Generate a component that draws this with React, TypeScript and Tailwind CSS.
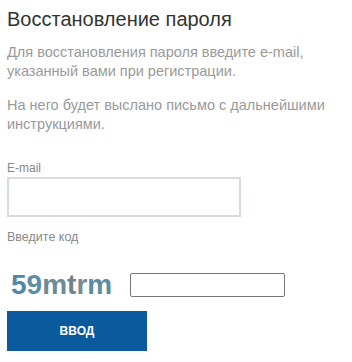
export default function App() {
  return (
    <div className="bg-white min-h-[362px] px-[7px] pt-[7px] font-['Liberation_Sans',Arial,sans-serif]">
      <h1 className="text-[20px] leading-[24px] text-[#333]">Восстановление пароля</h1>

      <p className="mt-[12px] text-[14.5px] leading-[19px] text-[#9a9a9a]">
        Для восстановления пароля введите e-mail,
        <br />
        указанный вами при регистрации.
      </p>
      <p className="mt-[15px] text-[14.5px] leading-[19px] text-[#9a9a9a]">
        На него будет выслано письмо с дальнейшими
        <br />
        инструкциями.
      </p>

      <form className="mt-[27px]" onSubmit={(e) => e.preventDefault()}>
        <label className="block text-[12px] leading-[14px] text-[#888]">E-mail</label>
        <input
          type="text"
          className="mt-[2px] block w-[234px] h-[40px] border-2 border-[#d5dde0] bg-white outline-none"
        />

        <label className="mt-[13px] block text-[12.5px] leading-[14px] text-[#888]">Введите код</label>

        <div className="mt-[29px] flex items-center gap-[18px]">
          <span className="pl-[4px] text-[28px] leading-[24px] font-bold">
            <span className="text-[#4f88a8]">5</span>
            <span className="text-[#5d8ca5]">9</span>
            <span className="text-[#6d8a98]">m</span>
            <span className="text-[#70838d]">t</span>
            <span className="text-[#7b8b93]">r</span>
            <span className="text-[#5f8ba2]">m</span>
          </span>
          <input
            type="text"
            className="w-[155px] h-[24px] border border-[#777] rounded-[2px] bg-white outline-none"
          />
        </div>

        <button
          type="submit"
          className="mt-[14px] block w-[140px] h-[40px] bg-[#0b5a9e] text-white text-[12px] font-bold uppercase"
        >
          Ввод
        </button>
      </form>
    </div>
  );
}
